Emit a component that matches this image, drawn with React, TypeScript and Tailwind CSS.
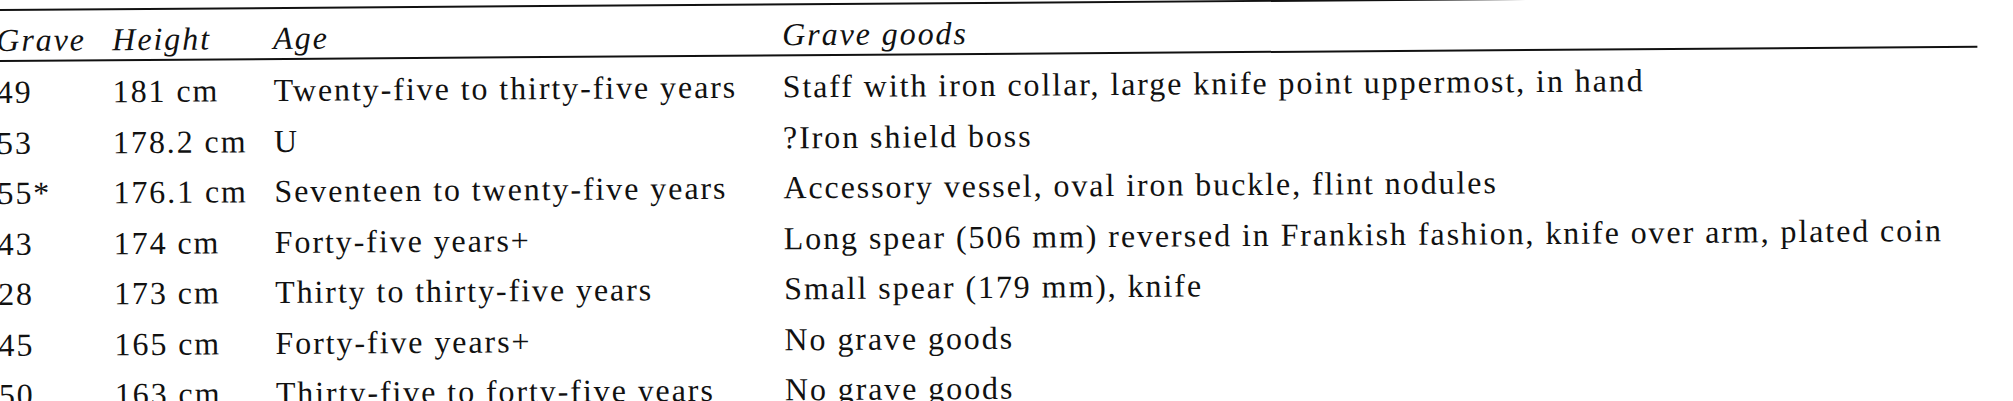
const rows = [
  ["49", "181 cm", "Twenty-five to thirty-five years", "Staff with iron collar, large knife point uppermost, in hand"],
  ["53", "178.2 cm", "U", "?Iron shield boss"],
  ["55*", "176.1 cm", "Seventeen to twenty-five years", "Accessory vessel, oval iron buckle, flint nodules"],
  ["43", "174 cm", "Forty-five years+", "Long spear (506 mm) reversed in Frankish fashion, knife over arm, plated coin"],
  ["28", "173 cm", "Thirty to thirty-five years", "Small spear (179 mm), knife"],
  ["45", "165 cm", "Forty-five years+", "No grave goods"],
  ["50", "163 cm", "Thirty-five to forty-five years", "No grave goods"],
];

const cols = "grid grid-cols-[116px_161px_509px_1fr]";

const App = () => {
  return (
    <div className="w-[2013px] h-[401px] overflow-hidden bg-white text-[#111] font-['Liberation_Serif',serif] text-[32px] tracking-[0.06em]">
      {/* the scan is slightly skewed, so the whole table is tilted a touch */}
      <div className="w-[1981px] -ml-[4px] pt-[9px] origin-top-left rotate-[-0.41deg]">
        <div className={`${cols} border-t-2 border-b-2 border-[#111] italic leading-[40px] pt-[9px]`}>
          <div>Grave</div>
          <div>Height</div>
          <div>Age</div>
          <div>Grave goods</div>
        </div>

        <div className="pt-[5px] border-b-2 border-[#111]">
          {rows.map((r) => (
            <div key={r[0]} className={`${cols} leading-[50.5px] whitespace-nowrap`}>
              <div>{r[0]}</div>
              <div>{r[1]}</div>
              <div>{r[2]}</div>
              <div>{r[3]}</div>
            </div>
          ))}
        </div>
      </div>
    </div>
  );
};

export default App;
